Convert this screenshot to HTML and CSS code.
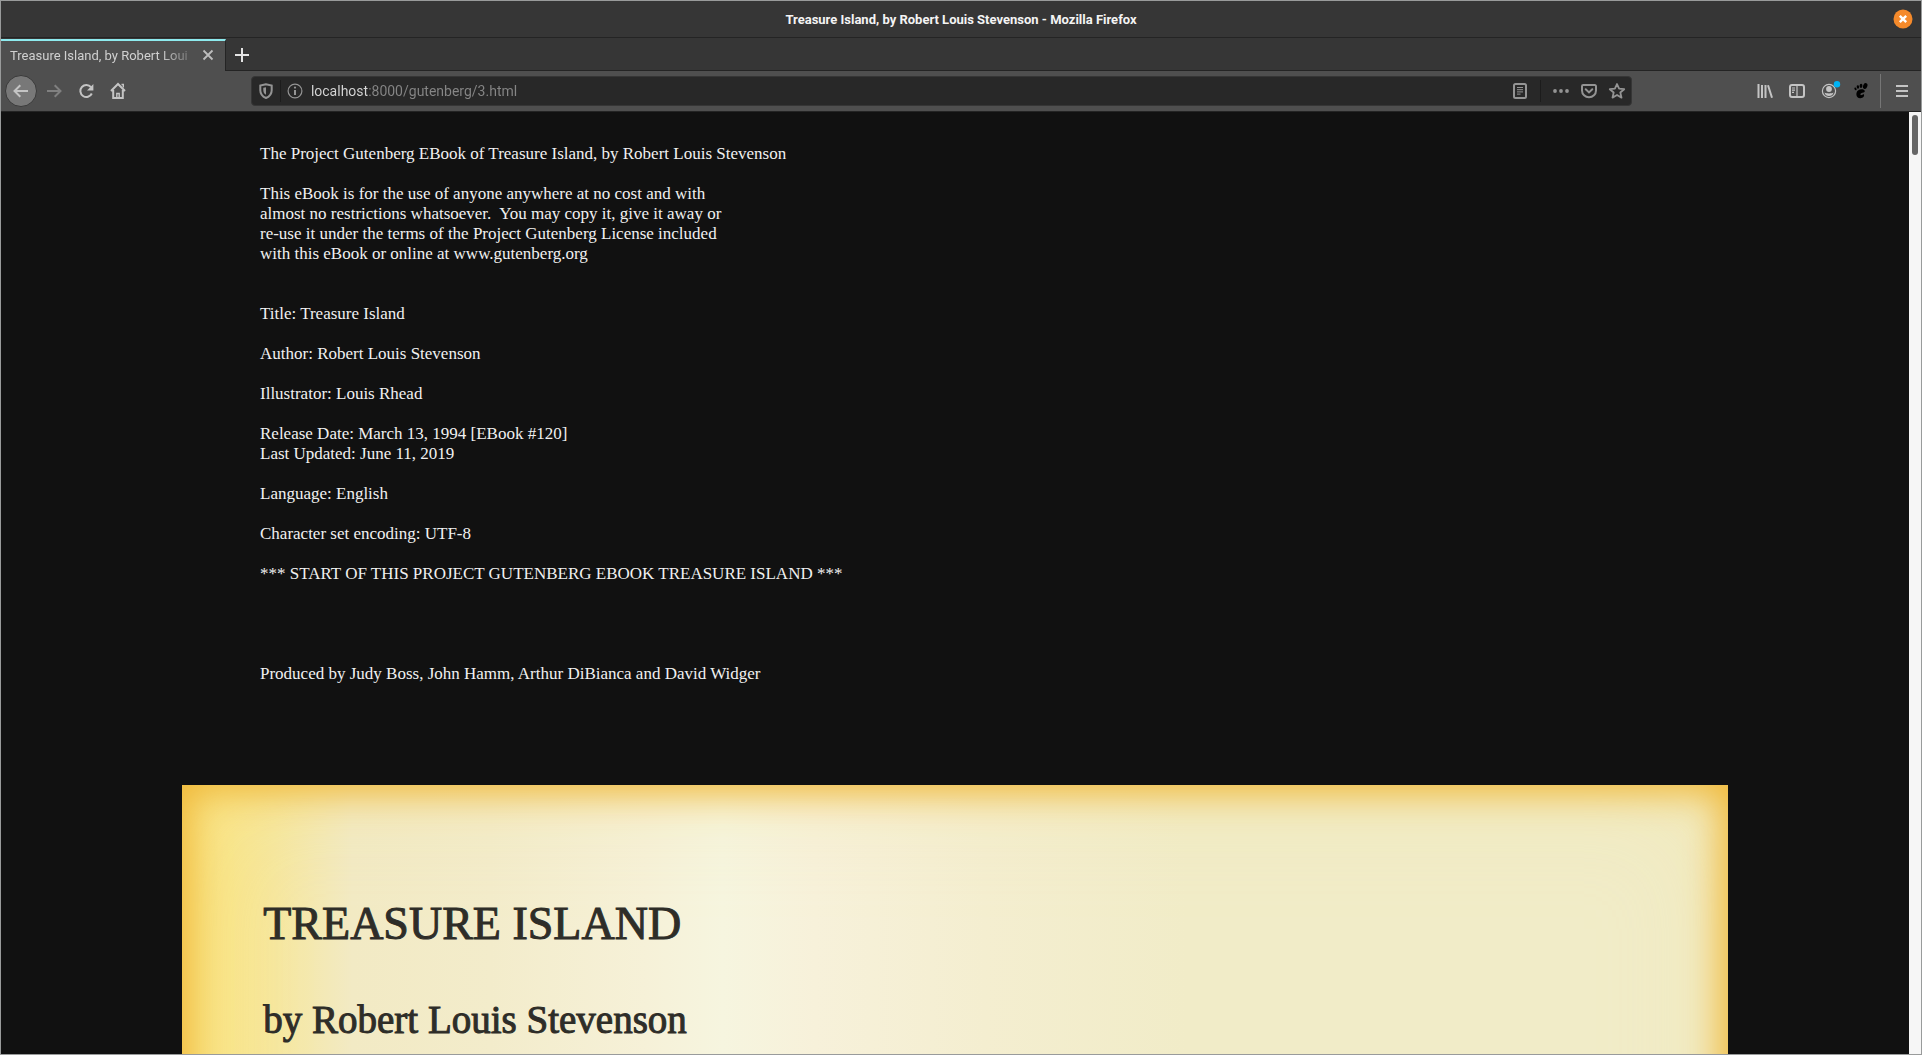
FILE: index.html
```html
<!DOCTYPE html>
<html lang="en">
<head>
<meta charset="utf-8">
<title>Treasure Island, by Robert Louis Stevenson</title>
<link rel="stylesheet" href="styles.css">
</head>
<body class="window">
<header class="titlebar">
  <span class="titlebar-text">Treasure Island, by Robert Louis Stevenson - Mozilla Firefox</span>
  <button class="window-close" aria-label="Close window">
    <svg width="20" height="20" viewBox="0 0 20 20"><circle cx="10" cy="10" r="9.5" fill="#f58a2b"/><path d="M6.8 6.8l6.4 6.4M13.2 6.8l-6.4 6.4" stroke="#fff" stroke-width="2.4"/></svg>
  </button>
</header>
<nav class="tabs" aria-label="Tabs">
  <div class="tab">
    <button class="tab-title">Treasure Island, by Robert Loui</button>
    <button class="tab-close" aria-label="Close tab"><svg width="12" height="12" viewBox="0 0 12 12"><path d="M1.5 1.5l9 9M10.5 1.5l-9 9" stroke="#bdbdbd" stroke-width="1.8"/></svg></button>
  </div>
  <button class="tab-new" aria-label="New tab"><svg width="14" height="14" viewBox="0 0 14 14"><path d="M7 0v14M0 7h14" stroke="#e4e4e4" stroke-width="2"/></svg></button>
</nav>
<div class="toolbar">
  <button class="tool tool-back" aria-label="Back"><svg class="icon" viewBox="0 0 16 16"><path d="M15 8H1.8M7.3 2.2L1.5 8l5.800 5.800"/></svg></button>
  <button class="tool tool-off" aria-label="Forward"><svg class="icon" viewBox="0 0 16 16"><path d="M1 8h13.200M8.700 2.200L14.500 8l-5.800 5.800"/></svg></button>
  <button class="tool" aria-label="Reload"><svg class="icon" viewBox="0 0 16 16"><path d="M13.800 10.500A6 6 0 1 1 13 4.200"/><path d="M15.400 1v6.400h-6.400z" fill="currentColor" stroke="none"/></svg></button>
  <button class="tool" aria-label="Home"><svg class="icon" viewBox="0 0 16 16"><path d="M1 8l7-7 7 7M3.200 7v8h9.600V7"/><path d="M11.500 1.500h1.800v3M6.800 15v-4.500h2.400V15" stroke-width="1.400"/></svg></button>
  <span class="spacer"></span>
  <div class="urlbar">
    <button class="url-tool url-shield" aria-label="Tracking protection"><svg class="icon" viewBox="0 0 16 16"><path d="M8 1.200L2.300 2.500v4.700c0 4 2.200 6.300 5.700 7.800 3.500-1.500 5.700-3.800 5.700-7.800V2.500z"/><path d="M8 4.200v7.600c-1.700-1-2.700-2.400-2.700-4.800V4.800z" fill="currentColor" stroke="none"/></svg></button>
    <span class="divider"></span>
    <button class="url-tool" aria-label="Site information"><svg class="icon" viewBox="0 0 16 16"><circle cx="8" cy="8" r="6.900" stroke-width="1.200"/><path d="M8 7v5" /><circle cx="8" cy="4.600" r="1.100" fill="currentColor" stroke="none"/></svg></button>
    <input class="url-input" type="text" aria-label="Address" value="localhost:8000/gutenberg/3.html" spellcheck="false">
    <button class="url-tool" aria-label="Reader view"><svg class="icon" viewBox="0 0 16 16"><rect x="2" y="1" width="12" height="14" rx="1.500"/><path d="M5 4.500h6M5 6.700h6M5 8.900h6M5 11.100h3.500" stroke-width="1"/></svg></button>
    <span class="divider divider-gap"></span>
    <button class="url-tool" aria-label="Page actions"><svg class="icon" viewBox="0 0 16 16"><g fill="currentColor" stroke="none"><circle cx="2" cy="8" r="1.900"/><circle cx="8" cy="8" r="1.900"/><circle cx="14" cy="8" r="1.900"/></g></svg></button>
    <button class="url-tool" aria-label="Save to Pocket"><svg class="icon" viewBox="0 0 16 16"><path d="M2.200 2h11.600a1.200 1.200 0 0 1 1.200 1.200V7.500a7 6.800 0 0 1-14 0V3.200A1.200 1.200 0 0 1 2.200 2z"/><path d="M4.700 6.200L8 9.400l3.300-3.200" stroke-linecap="round"/></svg></button>
    <button class="url-tool" aria-label="Bookmark this page"><svg class="icon" viewBox="0 0 16 16"><path d="M8 1l2.100 4.700 5.100.5-3.900 3.300 1.200 5.100L8 12l-4.500 2.600 1.200-5.100L.8 6.200l5.100-.5z" stroke-linejoin="round" stroke-width="1.800"/></svg></button>
  </div>
  <span class="spacer"></span>
  <button class="tool" aria-label="Library"><svg class="icon" viewBox="0 0 16 16"><path d="M1.500 1v14M5 2v13M8.500 2v13M11 2.200l4 12.600"/></svg></button>
  <button class="tool" aria-label="Sidebars"><svg class="icon" viewBox="0 0 16 16"><rect x="1" y="2" width="14" height="12" rx="2"/><path d="M8 2v12M3 5h3M3 7.200h3M3 9.400h2" stroke-width="1.200"/></svg></button>
  <button class="tool" aria-label="Account"><svg class="icon" viewBox="0 0 16 16"><circle cx="8" cy="8" r="6.600" stroke-width="1.200"/><circle cx="8" cy="6" r="2.900" fill="currentColor" stroke="none"/><path d="M3.500 9.500c2 1.200 7 1.200 9 0-.4 2.400-2.200 3.600-4.500 3.600s-4.100-1.200-4.500-3.600z" fill="currentColor" stroke="none"/><circle cx="16" cy="1.300" r="3.200" fill="#00b3f4" stroke="none"/></svg></button>
  <button class="tool tool-foot" aria-label="GNOME Shell integration"><svg class="icon" viewBox="0 0 16 16"><g fill="currentColor" stroke="none"><ellipse cx="12.200" cy="3" rx="2.100" ry="3" transform="rotate(22 12.200 3)"/><ellipse cx="8" cy="2.800" rx="1.400" ry="2.100" transform="rotate(8 8 2.800)"/><ellipse cx="4.900" cy="4" rx="1.200" ry="1.700" transform="rotate(-10 4.900 4)"/><ellipse cx="2.500" cy="5.900" rx="1" ry="1.500" transform="rotate(-25 2.500 5.900)"/><path d="M11.800 8.300C11.500 6 7.500 5.700 5 7.400 2.500 9.200 2.600 15 7.200 15.200c3 .1 4.400-2 3.800-3.600-.6-1.100-1.500.2-2.500.5-1.200.3-1.500-1.200-.3-1.800 1.500-.7 3.700-.6 3.600-2z"/></g></svg></button>
  <span class="divider divider-menu"></span>
  <button class="tool" aria-label="Open menu"><svg class="icon" viewBox="0 0 16 16"><path d="M2 3h12M2 8h12M2 13h12"/></svg></button>
</div>
<div class="viewport">
  <main class="page">
<pre class="preamble">
The Project Gutenberg EBook of Treasure Island, by Robert Louis Stevenson

This eBook is for the use of anyone anywhere at no cost and with
almost no restrictions whatsoever.  You may copy it, give it away or
re-use it under the terms of the Project Gutenberg License included
with this eBook or online at www.gutenberg.org


Title: Treasure Island

Author: Robert Louis Stevenson

Illustrator: Louis Rhead

Release Date: March 13, 1994 [EBook #120]
Last Updated: June 11, 2019

Language: English

Character set encoding: UTF-8

*** START OF THIS PROJECT GUTENBERG EBOOK TREASURE ISLAND ***




Produced by Judy Boss, John Hamm, Arthur DiBianca and David Widger
</pre>
    <article class="parchment">
      <h1 class="book-title">TREASURE ISLAND</h1>
      <h2 class="book-author">by Robert Louis Stevenson</h2>
    </article>
  </main>
  <div class="scrollbar"><div class="scrollbar-thumb"></div></div>
</div>
</body>
</html>
```
FILE: styles.css
```css
* {
  box-sizing: border-box;
}

.window {
  display: flex;
  flex-direction: column;
  height: 100vh;
  margin: 0;
  overflow: hidden;
  border: 1px solid #999b9b;
  background: #111;
  font-family: Roboto, "Noto Sans", sans-serif;
}

button {
  display: flex;
  align-items: center;
  justify-content: center;
  padding: 0;
  border: 0;
  background: none;
  color: inherit;
  font: inherit;
}

.titlebar {
  display: grid;
  grid-template-columns: 36px 1fr 36px;
  align-items: center;
  flex: none;
  height: 37px;
  border-bottom: 1px solid #242424;
  background: #363636;
}

.titlebar-text {
  grid-column: 2;
  color: #f4f4f4;
  font-size: 13px;
  font-weight: 700;
  text-align: center;
}

.window-close {
  justify-self: center;
}

.tabs {
  display: flex;
  flex: none;
  height: 33px;
  background: linear-gradient(#242424, #242424) bottom / 100% 1px no-repeat #363636;
}

.tab {
  display: flex;
  align-items: center;
  width: 225px;
  padding: 0 7px 2px 9px;
  border-top: 2px solid #8eeaee;
  border-right: 1px solid #242424;
  margin-top: 1px;
  background: #4f4f4f;
  color: #d0d0d0;
}

.tab-title {
  flex: 1;
  justify-content: flex-start;
  font-size: 13px;
  white-space: nowrap;
  -webkit-mask-image: linear-gradient(to right, #000 150px, transparent 190px);
  mask-image: linear-gradient(to right, #000 150px, transparent 190px);
}

.tab-close {
  width: 20px;
  height: 20px;
}

.tab-new {
  width: 32px;
}

.toolbar {
  display: flex;
  align-items: center;
  flex: none;
  height: 41px;
  padding: 0 3px 0 4px;
  border-bottom: 1px solid #242424;
  background: #4f4f4f;
  color: #c4c4c4;
}

.icon {
  width: 16px;
  height: 16px;
  overflow: visible;
  fill: none;
  stroke: currentColor;
  stroke-width: 2;
}

.tool {
  flex: none;
  width: 32px;
  height: 32px;
}

.tool-back {
  margin-right: 1px;
  border: 1px solid #3a3a3a;
  border-radius: 50%;
  background: #787878;
}

.tool-off {
  color: #808080;
}

.tool-foot {
  color: #000;
}

.spacer {
  flex: 5;
}

.urlbar {
  display: flex;
  align-items: center;
  flex: 59;
  height: 30px;
  border: 1px solid #363636;
  border-radius: 4px;
  background: #282828;
  color: #949494;
}

.url-tool {
  flex: none;
  width: 28px;
  height: 28px;
}

.divider {
  width: 1px;
  height: 22px;
  background: #1c1c1c;
}

.divider-gap {
  margin: 0 6px;
}

.divider-menu {
  height: 34px;
  margin: 0 5px 0 3px;
  background: #767676;
}

.url-input {
  flex: 1;
  min-width: 0;
  padding: 0 0 0 2px;
  border: 0;
  outline: 0;
  background: linear-gradient(to right, #d8d8d8 59px, #868686 59px);
  -webkit-background-clip: text;
  background-clip: text;
  color: transparent;
  font: 14px/20px Roboto, "Noto Sans", sans-serif;
}

.viewport {
  display: flex;
  flex: 1;
  min-height: 0;
}

.page {
  flex: 1;
  min-width: 0;
  overflow: hidden;
  background: #111;
  font-family: "Liberation Serif", "Times New Roman", serif;
}

.preamble {
  margin: 32px 0 101px;
  padding-left: 259px;
  color: #f0f0f0;
  font: 17px/20px "Liberation Serif", "Times New Roman", serif;
}

.parchment {
  width: 81%;
  min-height: 600px;
  margin: 0 auto;
  padding: 107px 81px;
  background: linear-gradient(to right, #fae27a 0, #f9e58a 3%, #f6e79e 6%, #f2eac4 11%, #f3eccb 20%, #f6f1d8 30%, #f6f5df 35%, #f7f1da 41%, #f4eed0 52%, #f1ecc8 65%, #f1ecc8 100%);
  box-shadow: inset 0 0 36px 8px #f0b93a, inset 0 0 120px rgba(244, 228, 150, 0.4);
  color: #2e2d28;
}

.book-title,
.book-author {
  margin: 0;
  font-weight: 400;
  line-height: 64px;
  -webkit-text-stroke: 1px #2e2d28;
}

.book-title {
  margin-bottom: 32px;
  font-size: 46px;
}

.book-author {
  font-size: 39px;
}

.scrollbar {
  flex: none;
  width: 12px;
  padding: 3px;
  background: #f6f6f6;
}

.scrollbar-thumb {
  height: 40px;
  border-radius: 3px;
  background: #666;
}
```
